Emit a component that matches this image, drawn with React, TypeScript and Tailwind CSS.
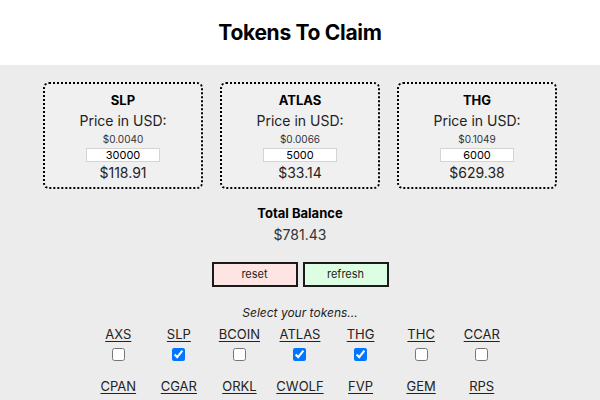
import { useState } from "react";

const cards = [
  { name: "SLP", price: "$0.0040", amount: "30000", total: "$118.91" },
  { name: "ATLAS", price: "$0.0066", amount: "5000", total: "$33.14" },
  { name: "THG", price: "$0.1049", amount: "6000", total: "$629.38" },
];

const tokens = [
  ["AXS", "SLP", "BCOIN", "ATLAS", "THG", "THC", "CCAR"],
  ["CPAN", "CGAR", "ORKL", "CWOLF", "FVP", "GEM", "RPS"],
];

const initial = ["SLP", "ATLAS", "THG"];

export default function App() {
  const [picked, setPicked] = useState<string[]>(initial);

  const toggle = (t: string) =>
    setPicked((p) => (p.includes(t) ? p.filter((x) => x !== t) : [...p, t]));

  return (
    <div className="min-h-[400px] bg-[#ececec] font-['Inter',sans-serif] text-[#222]">
      <header className="flex h-[65px] items-center justify-center bg-white">
        <h1 className="text-[21px] font-bold tracking-[-0.3px] text-black">Tokens To Claim</h1>
      </header>

      <div className="flex justify-center gap-[17px] pt-[17px]">
        {cards.map((c) => (
          <div
            key={c.name}
            className="flex h-[107px] w-[160px] flex-col items-center rounded-md border-2 border-dotted border-black bg-[#f0f0f0] pt-[6px]"
          >
            <div className="text-[13px] font-bold leading-[20px] text-black">{c.name}</div>
            <div className="text-[14px] leading-[22px]">Price in USD:</div>
            <div className="text-[10px] leading-[14px] text-[#333]">{c.price}</div>
            <input
              defaultValue={c.amount}
              className="mt-[2px] h-[14px] w-[74px] border border-[#d4d4d4] bg-white text-center text-[11px] leading-[12px] text-black outline-none"
            />
            <div className="text-[14px] leading-[22px]">{c.total}</div>
          </div>
        ))}
      </div>

      <div className="mt-[14px] flex flex-col items-center">
        <div className="text-[13px] font-bold leading-[20px] text-black">Total Balance</div>
        <div className="mt-[1px] text-[14px] leading-[22px] text-[#333]">$781.43</div>
        <div className="mt-[16px] flex gap-[5px]">
          <button className="h-[25px] w-[86px] border-2 border-[#1a1a1a] bg-[#ffe4e4] text-[11px] text-[#222]">
            reset
          </button>
          <button className="h-[25px] w-[86px] border-2 border-[#1a1a1a] bg-[#dcffe3] text-[11px] text-[#222]">
            refresh
          </button>
        </div>
        <div className="mt-[17px] text-[12px] italic leading-[18px] text-[#222]">Select your tokens...</div>
      </div>

      <div className="mx-auto mt-[2px] flex w-[424px] flex-col gap-[15px]">
        {tokens.map((row, i) => (
          <div key={i} className="grid grid-cols-7">
            {row.map((t) => (
              <label key={t} className="flex flex-col items-center">
                <span className="text-[13px] leading-[20px] text-[#222] underline underline-offset-2">{t}</span>
                <input
                  type="checkbox"
                  checked={picked.includes(t)}
                  onChange={() => toggle(t)}
                  className="mt-[4px] h-[13px] w-[13px]"
                />
              </label>
            ))}
          </div>
        ))}
      </div>
    </div>
  );
}
